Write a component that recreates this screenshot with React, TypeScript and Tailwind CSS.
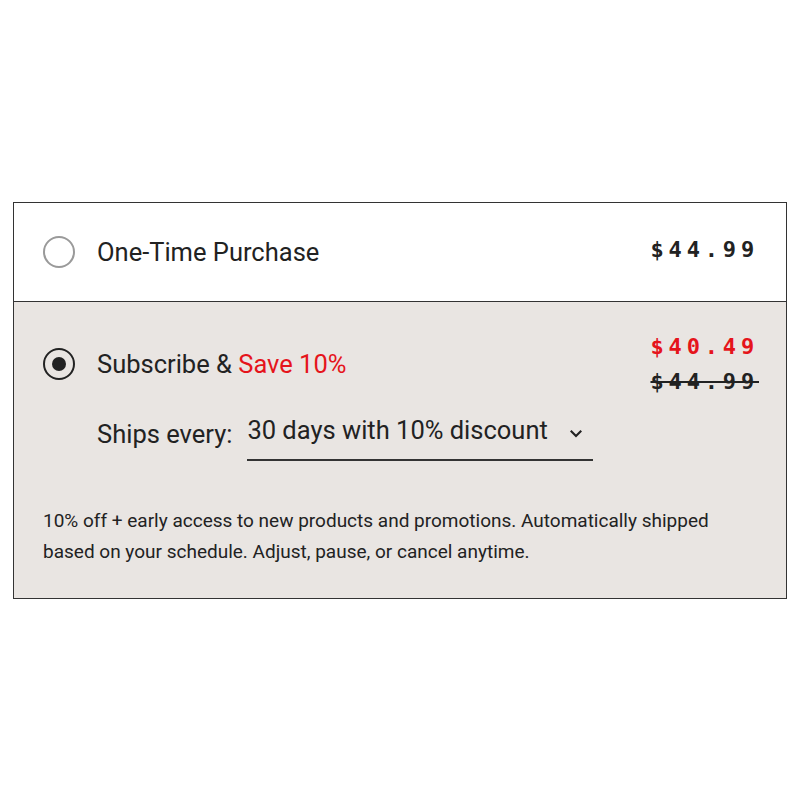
const options = {
  oneTime: { label: "One-Time Purchase", price: "$44.99" },
  subscribe: { price: "$40.49", was: "$44.99", interval: "30 days with 10% discount" },
};

function Radio({ checked }: { checked?: boolean }) {
  return (
    <span
      className={[
        "flex h-[32px] w-[32px] shrink-0 items-center justify-center rounded-full",
        checked ? "border-2 border-[#222]" : "border-2 border-[#9a9a9a]",
      ].join(" ")}
    >
      {checked && <span className="h-[14px] w-[14px] rounded-full bg-[#222]" />}
    </span>
  );
}

export default function App() {
  return (
    <div className="min-h-[800px] bg-white pt-[202px] px-[13px] font-['Roboto',sans-serif] text-[#222]">
      <div className="border-[1.5px] border-[#333]">
        <div className="flex h-[99px] items-center justify-between border-b-[1.5px] border-[#333] pl-[29px] pr-[29px]">
          <div className="flex items-center gap-[22px]">
            <Radio />
            <span className="text-[25.5px]">{options.oneTime.label}</span>
          </div>
          <span className="-mt-[6px] -mr-[2px] font-['DejaVu_Sans_Mono',monospace] text-[22px] font-bold tracking-[0.22em]">
            {options.oneTime.price}
          </span>
        </div>

        <div className="bg-[#e9e5e2] pl-[29px] pr-[29px] pt-[27px] pb-[31px]">
          <div className="flex items-center justify-between">
            <div className="flex items-center gap-[22px]">
              <Radio checked />
              <span className="text-[25.5px]">
                Subscribe & <span className="text-[#e5141b]">Save 10%</span>
              </span>
            </div>
            <div className="-mr-[2px] flex flex-col items-end font-['DejaVu_Sans_Mono',monospace] text-[22px] font-bold tracking-[0.22em] leading-[35px]">
              <span className="text-[#e5141b]">{options.subscribe.price}</span>
              <span className="line-through decoration-2">{options.subscribe.was}</span>
            </div>
          </div>

          <div className="mt-[13px] flex items-end gap-[15px] pl-[54px]">
            <span className="pb-[9px] text-[25.5px] leading-[36px]">Ships every:</span>
            <div className="flex w-[346px] items-center justify-between border-b-2 border-[#333] pb-[11px]">
              <span className="text-[25.5px] leading-[36px]">{options.subscribe.interval}</span>
              <svg width="18" height="18" viewBox="0 0 24 24" fill="none" stroke="#222" strokeWidth="2.8" className="mr-[8px] mt-[6px]">
                <path d="M5 9l7 7 7-7" />
              </svg>
            </div>
          </div>

          <p className="mt-[44px] text-[19px] leading-[31px]">
            10% off + early access to new products and promotions. Automatically shipped
            <br />
            based on your schedule. Adjust, pause, or cancel anytime.
          </p>
        </div>
      </div>
    </div>
  );
}
